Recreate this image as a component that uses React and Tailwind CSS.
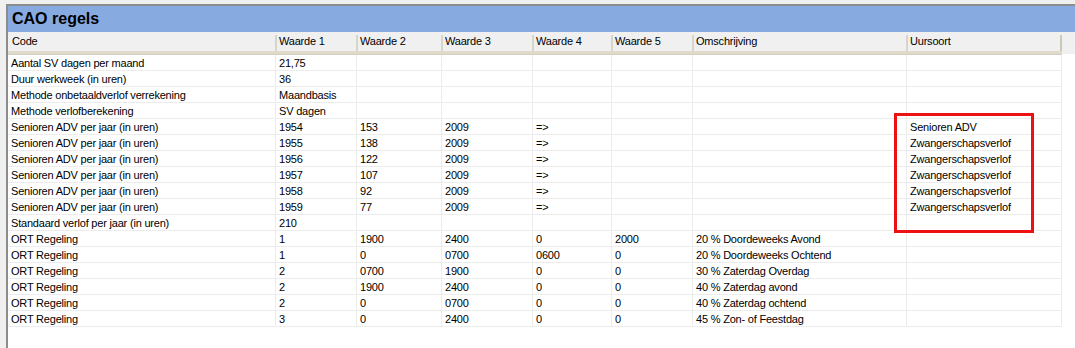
const cols = 'grid grid-cols-[267px_81px_85px_91px_79px_81px_214px_156px]';

const headers = ['Code', 'Waarde 1', 'Waarde 2', 'Waarde 3', 'Waarde 4', 'Waarde 5', 'Omschrijving', 'Uursoort'];

const rows = [
  ['Aantal SV dagen per maand', '21,75', '', '', '', '', '', ''],
  ['Duur werkweek (in uren)', '36', '', '', '', '', '', ''],
  ['Methode onbetaaldverlof verrekening', 'Maandbasis', '', '', '', '', '', ''],
  ['Methode verlofberekening', 'SV dagen', '', '', '', '', '', ''],
  ['Senioren ADV per jaar (in uren)', '1954', '153', '2009', '=>', '', '', 'Senioren ADV'],
  ['Senioren ADV per jaar (in uren)', '1955', '138', '2009', '=>', '', '', 'Zwangerschapsverlof'],
  ['Senioren ADV per jaar (in uren)', '1956', '122', '2009', '=>', '', '', 'Zwangerschapsverlof'],
  ['Senioren ADV per jaar (in uren)', '1957', '107', '2009', '=>', '', '', 'Zwangerschapsverlof'],
  ['Senioren ADV per jaar (in uren)', '1958', '92', '2009', '=>', '', '', 'Zwangerschapsverlof'],
  ['Senioren ADV per jaar (in uren)', '1959', '77', '2009', '=>', '', '', 'Zwangerschapsverlof'],
  ['Standaard verlof per jaar (in uren)', '210', '', '', '', '', '', ''],
  ['ORT Regeling', '1', '1900', '2400', '0', '2000', '20 % Doordeweeks Avond', ''],
  ['ORT Regeling', '1', '0', '0700', '0600', '0', '20 % Doordeweeks Ochtend', ''],
  ['ORT Regeling', '2', '0700', '1900', '0', '0', '30 % Zaterdag Overdag', ''],
  ['ORT Regeling', '2', '1900', '2400', '0', '0', '40 % Zaterdag avond', ''],
  ['ORT Regeling', '2', '0', '0700', '0', '0', '40 % Zaterdag ochtend', ''],
  ['ORT Regeling', '3', '0', '2400', '0', '0', '45 % Zon- of Feestdag', ''],
];

export default function App() {
  return (
    <div className="relative w-[1075px] h-[348px] overflow-hidden bg-[#f0f0f0] pt-[4px] pl-[6px] font-['Liberation_Sans',Arial,sans-serif] text-[11px] tracking-[-0.2px] text-black">
      <div className="h-[344px] border-t-2 border-l-2 border-[#8c8c8c] bg-white flex flex-col">
        {/* titelbalk */}
        <div className="h-[26px] bg-[#87aae0] flex items-center pl-[4px] text-[16px] font-bold tracking-normal text-black">
          CAO regels
        </div>

        {/* kolomkoppen */}
        <div className="h-[22px] bg-[#f0f0f0] flex">
          <div className={`${cols} border-b-[3px] border-[#dedbcc] shadow-[0_1px_0_#d2cfbf]`}>
            {headers.map((h, i) => (
              <div key={h} className="relative h-[19px] flex items-center pl-[4px] leading-none">
                {i > 0 && <span className="absolute left-0 top-[3px] bottom-0 w-[2px] bg-[#d8d5c6]" />}
                {i === headers.length - 1 && <span className="absolute right-0 top-[3px] bottom-0 w-[2px] bg-[#cbc8b8]" />}
                {h}
              </div>
            ))}
          </div>
        </div>

        {/* regels */}
        <div className="pt-[1px]">
          {rows.map((r, ri) => (
            <div key={ri} className={`${cols} h-[16px]`}>
              {r.map((c, ci) => (
                <div
                  key={ci}
                  className={`h-[16px] border-b border-[#ececec] pl-[3px] leading-[17px] whitespace-nowrap overflow-hidden ${ci > 0 ? 'border-l' : ''} ${ci === r.length - 1 ? 'border-r' : ''}`}
                >
                  {c}
                </div>
              ))}
            </div>
          ))}
        </div>
      </div>

      {/* markering uursoort */}
      <div className="absolute left-[894px] top-[113px] w-[140px] h-[120px] border-[3px] border-[#ee1111]" />
    </div>
  );
}
